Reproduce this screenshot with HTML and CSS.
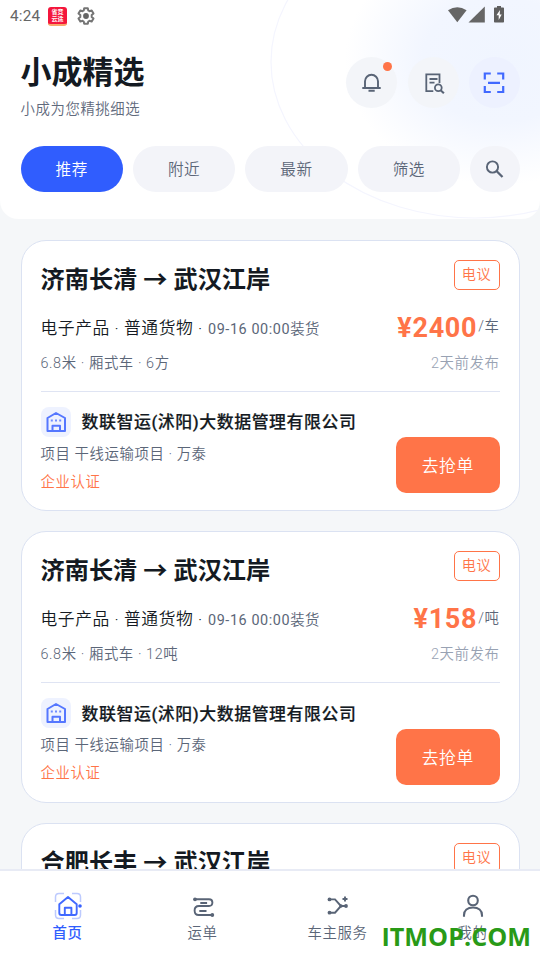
FILE: index.html
```
<!DOCTYPE html>
<html lang="zh-CN">
<head>
<meta charset="utf-8">
<title>小成精选</title>
<link rel="stylesheet" href="styles.css">
</head>
<body>
<svg class="defs" width="0" height="0" aria-hidden="true">
  <symbol id="building" viewBox="0 0 30 30">
    <path d="M6.500 24V11L15 6l9 5v13zM11.500 24v-5.300h7.500V24" fill="none" stroke="#5577ff" stroke-width="2" stroke-linejoin="round"/>
    <path d="M9.800 13.500h2M14 13.500h2M18.200 13.500h2" stroke="#6f8cff" stroke-width="1.800"/>
  </symbol>
</svg>
<div class="app">
  <header class="header">
    <svg class="orbit" width="540" height="219" viewBox="0 0 540 219"><ellipse cx="475" cy="62" rx="204" ry="156" fill="none" stroke="#f4f5fe" stroke-width="1.200"/></svg>
    <div class="status">
      <span class="clock">4:24</span>
      <span class="app-badge"><span>省竞</span><span>云途</span></span>
      <svg class="gear" width="18" height="18" viewBox="0 0 18 18"><path d="M7.200 1.200h3.600l.5 2.300 1.200.7 2.200-.8 1.800 3.100-1.800 1.600v1.800l1.800 1.600-1.800 3.100-2.200-.8-1.200.7-.5 2.300H7.200l-.5-2.300-1.200-.7-2.200.8-1.800-3.100 1.800-1.600V8.100L1.500 6.500l1.800-3.100 2.200.8 1.200-.7z" fill="none" stroke="#757575" stroke-width="2" stroke-linejoin="round"/><circle cx="9" cy="9" r="2.900" fill="#666"/></svg>
      <svg class="signals" width="58" height="18" viewBox="0 0 58 18"><path d="M0 3.500Q9.300-2.500 18.600 3.500L9.300 15.500z" transform="translate(0 .8)" fill="#666"/><path d="M20.500 16.500H36.800V.5z" fill="#666"/><path d="M49 0h4v1.500h2.200q.8 0 .8.8v13.400q0 .8-.8.8h-8.400q-.8 0-.8-.8V2.300q0-.8.8-.8H49z" fill="#5f5f5f"/><path d="M52 4l-3.500 5.300h2.200V14l3-5.500h-2z" fill="#fff"/></svg>
    </div>
    <div class="heading">
      <div>
        <h1>小成精选</h1>
        <p class="subtitle">小成为您精挑细选</p>
      </div>
      <div class="actions">
        <button class="circle"><svg width="24" height="24" viewBox="0 0 24 24" fill="none" stroke="#596476" stroke-width="1.900"><path d="M6 16.500V10.300a6.500 6.500 0 0 1 13 0v6.200M3.300 17h18.400M9.500 19.800h6.200"/></svg><i class="dot"></i></button>
        <button class="circle"><svg width="24" height="24" viewBox="0 0 24 24" fill="none" stroke="#596476" stroke-width="1.800"><path d="M18.500 12V3.400H5.300v16.800h7M8.500 8h8M8.500 11.700h5"/><circle cx="17.300" cy="16.800" r="3.400"/><path d="M19.600 19.200l3.300 3" stroke-width="2.100"/></svg></button>
        <button class="circle scan"><svg width="24" height="24" viewBox="0 0 24 24" fill="none" stroke="#4169ff" stroke-width="2.200"><path d="M2.800 8.500v-6h6M15.200 2.500h6v6M21.200 15v6h-6M8.800 21h-6v-6M6 11.800h12"/></svg></button>
      </div>
    </div>
    <nav class="tabs">
      <button class="tab on">推荐</button>
      <button class="tab">附近</button>
      <button class="tab">最新</button>
      <button class="tab">筛选</button>
      <button class="tab search"><svg width="20" height="20" viewBox="0 0 20 20" fill="none" stroke="#596476" stroke-width="1.900"><circle cx="7.500" cy="8" r="5.600"/><path d="M11.500 12l6 6" stroke-width="2.300"/></svg></button>
    </nav>
  </header>

  <main class="list">
    <article class="card">
      <div class="row top"><h2>济南长清 <span class="arrow">→</span> 武汉江岸</h2><span class="tag">电议</span></div>
      <div class="row goods"><div>电子产品 · 普通货物 · <span class="date">09-16 00:00<i>装货</i></span></div><div class="price"><b>¥2400</b><span>/车</span></div></div>
      <div class="row spec"><span>6.8米 · 厢式车 · 6方</span><time>2天前发布</time></div>
      <div class="owner">
        <div class="company"><span class="logo"><svg width="30" height="30"><use href="#building"/></svg></span><span class="name">数联智运(沭阳)大数据管理有限公司</span></div>
        <p class="project">项目 干线运输项目 · 万泰</p>
        <p class="verified">企业认证</p>
        <button class="grab">去抢单</button>
      </div>
    </article>
    <article class="card">
      <div class="row top"><h2>济南长清 <span class="arrow">→</span> 武汉江岸</h2><span class="tag">电议</span></div>
      <div class="row goods"><div>电子产品 · 普通货物 · <span class="date">09-16 00:00<i>装货</i></span></div><div class="price"><b>¥158</b><span>/吨</span></div></div>
      <div class="row spec"><span>6.8米 · 厢式车 · 12吨</span><time>2天前发布</time></div>
      <div class="owner">
        <div class="company"><span class="logo"><svg width="30" height="30"><use href="#building"/></svg></span><span class="name">数联智运(沭阳)大数据管理有限公司</span></div>
        <p class="project">项目 干线运输项目 · 万泰</p>
        <p class="verified">企业认证</p>
        <button class="grab">去抢单</button>
      </div>
    </article>
    <article class="card">
      <div class="row top"><h2>合肥长丰 <span class="arrow">→</span> 武汉江岸</h2><span class="tag">电议</span></div>
    </article>
  </main>

  <nav class="bottom">
    <a class="item on"><svg width="28" height="28" viewBox="0 0 28 28" fill="none" stroke="#4169ff" stroke-width="1.900"><path d="M1.500 10V5q0-3.500 3.500-3.500h5M18 1.500h5q3.500 0 3.500 3.500v5M26.500 18v5q0 3.500-3.500 3.500h-5M10 26.500H5q-3.500 0-3.500-3.500v-5" stroke="#bdcafe" stroke-width="1.500"/><path d="M5.300 12.200L14 5l8.700 7.200V21q0 2-2 2H7.300q-2 0-2-2zM10.800 23v-7.300h6.600V23" stroke-linejoin="round"/><circle cx="26" cy="14" r="1.800" fill="#3660ff" stroke="none"/></svg><span>首页</span></a>
    <a class="item"><svg width="28" height="28" viewBox="0 0 28 28" fill="none" stroke="#596476" stroke-width="1.900"><path d="M6 7.200h14q3.400 0 3.400 3.400T20 14H10q-4.400 0-4.400 4.600T10 23h14M11.300 11h6.800M10.300 19h7.200"/><circle cx="6" cy="7.300" r="1.900" fill="#596476" stroke="none"/><circle cx="23.300" cy="23" r="1.900" fill="#596476" stroke="none"/></svg><span>运单</span></a>
    <a class="item"><svg width="28" height="28" viewBox="0 0 28 28" fill="none" stroke="#596476" stroke-width="1.900"><path d="M5.500 7.400h5.500L17 14l-6 6.700H5.500M16 14h7M18.500 7h5M21 4.500v5"/><g fill="#596476" stroke="none"><circle cx="5.500" cy="7.400" r="1.900"/><circle cx="5.500" cy="20.700" r="1.900"/><circle cx="22" cy="14" r="1.900"/><circle cx="17" cy="14" r="1.700"/></g></svg><span>车主服务</span></a>
    <a class="item"><svg width="28" height="28" viewBox="0 0 28 28" fill="none" stroke="#596476" stroke-width="2.100"><circle cx="14" cy="8.500" r="4.800"/><path d="M5 24.700v-1.500c0-4.500 3.500-7.700 9-7.700s9 3.200 9 7.700v1.500"/></svg><span>我的</span></a>
  </nav>
  <div class="watermark">ITMOP.COM</div>
</div>
</body>
</html>
```

FILE: styles.css
```
* { box-sizing: border-box; margin: 0; padding: 0; }
body {
  font-family: Roboto, "Noto Sans CJK SC", sans-serif;
  font-size: 14.400px;
  font-weight: 350;
  letter-spacing: .58px;
  color: #141a22;
  overflow: hidden;
}
button { font: inherit; letter-spacing: inherit; border: 0; color: inherit; }
i { font-style: normal; }
.defs { position: absolute; }
.app { position: relative; height: 960px; display: flex; flex-direction: column; background: #f5f7f9; overflow: hidden; }

.header {
  position: relative;
  flex: none;
  height: 219px;
  border-radius: 0 0 18px 18px;
  background: radial-gradient(ellipse 155px 125px at 500px 60px, #f0f5ff 0%, #f2f6ff 50%, #fff 100%) #fff;
  overflow: hidden;
}
.orbit { position: absolute; left: 0; top: 0; }
.status { position: relative; display: flex; align-items: center; height: 32px; padding: 0 35px 0 10px; }
.clock { font-size: 15.300px; font-weight: 400; letter-spacing: .2px; color: #666; width: 38px; }
.app-badge {
  display: flex; flex-direction: column; align-items: center; justify-content: center;
  width: 19px; height: 19px; padding-bottom: 1px; border-radius: 3px;
  background: #f4163c; border-bottom: 2px solid #f8a66a;
  color: #fff; font-size: 6px; font-weight: 700; line-height: 7px; letter-spacing: 0;
}
.gear { margin-left: 10px; }
.signals { margin-left: auto; position: relative; top: -1px; width: 58px; margin-right: -1px; }

.heading { position: relative; display: flex; justify-content: space-between; padding: 0 20px 0 20.500px; height: 114px; }
h1 { font-size: 31px; line-height: 44px; letter-spacing: 0; padding-top: 19px; height: 64px; font-weight: 700; }
.subtitle { color: #5f6a7c; line-height: 28px; height: 28px; }
.actions { display: flex; gap: 10.500px; padding-top: 25px; }
.circle { position: relative; width: 51px; height: 51px; border-radius: 50%; background: #f3f5f9; display: flex; align-items: center; justify-content: center; }
.circle.scan { background: #edf1ff; }
.circle svg { margin-right: 1px; }
.dot { position: absolute; right: 5px; top: 5px; width: 9px; height: 9px; border-radius: 50%; background: #ff7448; }

.tabs { position: relative; display: flex; gap: 10px; padding: 0 20.500px; }
.tab { flex: 1; height: 46px; border-radius: 23px; background: #f3f4f9; color: #5b6678; font-size: 15.600px; display: flex; align-items: center; justify-content: center; padding-bottom: 3px; }
.tab.on { background: #305dfe; color: #fff; }
.tab.search { flex: 0 0 49.500px; padding: 0; }

.list { flex: 1; min-height: 0; overflow: hidden; padding: 20.500px 20.500px 0; display: flex; flex-direction: column; gap: 20.500px; }
.card { flex: none; height: 271.300px; background: #fff; border: 1.500px solid #dbe2f2; border-radius: 25px; padding: 19px 19px 0 19px; }
.row { display: flex; justify-content: space-between; }
.top { height: 49px; }
h2 { font-size: 24.200px; line-height: 36px; letter-spacing: 0; font-weight: 700; white-space: nowrap; }
.arrow { font-family: "Noto Sans CJK SC", sans-serif; }
.tag { width: 46px; height: 30px; border: 1.500px solid #ff7448; border-radius: 5px; color: #ff7448; line-height: 27px; text-align: center; font-size: 14.200px; }
.goods { height: 38px; line-height: 38px; font-size: 16.800px; white-space: nowrap; }
.date { font-size: 14.400px; font-weight: 450; color: #5b6678; margin-left: .5px; }
.date i { font-weight: 350; }
.price { display: flex; align-items: center; color: #ff7448; }
.price b { font-size: 27px; letter-spacing: .7px; }
.price span { font-size: 14.400px; line-height: 36px; color: #5b6678; margin: -1px 0 0 1px; }
.spec { height: 45px; line-height: 33px; color: #5b6678; border-bottom: 1.500px solid #dfe4f3; }
.spec time { color: #98a2b3; }
.owner { position: relative; padding-top: 15px; }
.company { display: flex; align-items: center; gap: 11px; height: 30px; font-size: 16.900px; font-weight: 500; white-space: nowrap; }
.name { padding-bottom: 2px; -webkit-text-stroke: .2px #141a22; }
.logo { width: 30px; height: 30px; border-radius: 8px; background: #eef2ff; display: flex; }
.project { color: #5b6678; line-height: 28px; height: 32px; padding-top: 4px; }
.verified { color: #ff7448; line-height: 28px; }
.grab { position: absolute; right: 0; top: 45.500px; width: 103.500px; height: 56px; border-radius: 10px; background: #ff7448; color: #fff; font-size: 16.800px; }

.bottom { flex: none; height: 91px; background: #fff; border-top: 2px solid #e8ebf5; display: flex; }
.item { flex: 1; display: flex; flex-direction: column; align-items: center; padding-top: 21px; color: #5b6678; }
.item span { line-height: 22px; margin-top: 3px; }
.item.on { color: #305dfe; font-weight: 500; }
.watermark { position: absolute; right: 9px; top: 918px; font: 700 25.200px/36px "Open Sans", sans-serif; letter-spacing: 0; color: #299a17; }
```
